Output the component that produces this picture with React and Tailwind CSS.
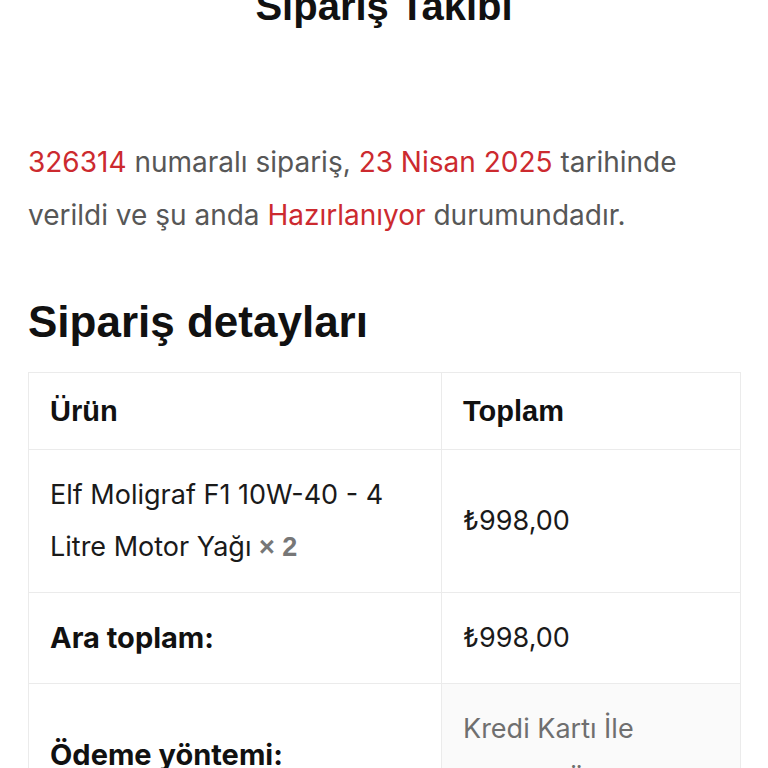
import React from "react";

export default function App() {
  const order = { id: "326314", date: "23 Nisan 2025", status: "Hazırlanıyor" };

  return (
    <div className="min-h-screen bg-white px-[28px] overflow-hidden">
      <h1 className="-mt-[16px] text-center text-[40px] leading-[44px] font-bold text-[#111] font-['Liberation_Sans',Arial,sans-serif]">
        Sipariş Takibi
      </h1>

      <p className="mt-[108px] text-[28px] leading-[53px] text-[#575757] font-['Inter',sans-serif]">
        <span className="text-[#cc2a2f]">{order.id}</span> numaralı sipariş,{" "}
        <span className="text-[#cc2a2f]">{order.date}</span> tarihinde verildi ve şu anda{" "}
        <span className="text-[#cc2a2f]">{order.status}</span> durumundadır.
      </p>

      <h2 className="mt-[54px] text-[44px] leading-[52px] font-bold text-[#111] font-['Liberation_Sans',Arial,sans-serif]">
        Sipariş detayları
      </h2>

      {/* order table */}
      <table className="mt-[24px] w-[713px] border-collapse border border-[#ebebeb] text-[27px] font-['Inter',sans-serif]">
        <thead>
          <tr>
            <th className="w-[413px] border border-[#ebebeb] px-[21px] py-[19px] text-left text-[29px] leading-[38px] font-bold text-[#111] font-['Liberation_Sans',Arial,sans-serif]">
              Ürün
            </th>
            <th className="border border-[#ebebeb] px-[21px] py-[19px] text-left text-[29px] leading-[38px] font-bold text-[#111] font-['Liberation_Sans',Arial,sans-serif]">
              Toplam
            </th>
          </tr>
        </thead>
        <tbody>
          <tr>
            <td className="border border-[#ebebeb] px-[21px] py-[19px] leading-[52px] text-[#1a1a1a]">
              Elf Moligraf F1 10W-40 - 4 Litre Motor Yağı{" "}
              <strong className="font-bold text-[#777] font-['Liberation_Sans',Arial,sans-serif]">× 2</strong>
            </td>
            <td className="border border-[#ebebeb] px-[21px] py-[19px] leading-[52px] text-[#1a1a1a]">
              ₺998,00
            </td>
          </tr>
          <tr>
            <th className="border border-[#ebebeb] px-[21px] py-[19px] text-left text-[29px] leading-[52px] font-bold text-[#111]">
              Ara toplam:
            </th>
            <td className="border border-[#ebebeb] px-[21px] py-[19px] leading-[52px] text-[#1a1a1a]">
              ₺998,00
            </td>
          </tr>
          <tr>
            <th className="border border-[#ebebeb] px-[21px] py-[19px] text-left text-[29px] leading-[52px] font-bold text-[#111]">
              Ödeme yöntemi:
            </th>
            <td className="border border-[#ebebeb] bg-[#fafafa] px-[21px] py-[19px] leading-[52px] text-[#6f6f6f]">
              Kredi Kartı İle Güvenli Ödeme
            </td>
          </tr>
        </tbody>
      </table>
    </div>
  );
}
